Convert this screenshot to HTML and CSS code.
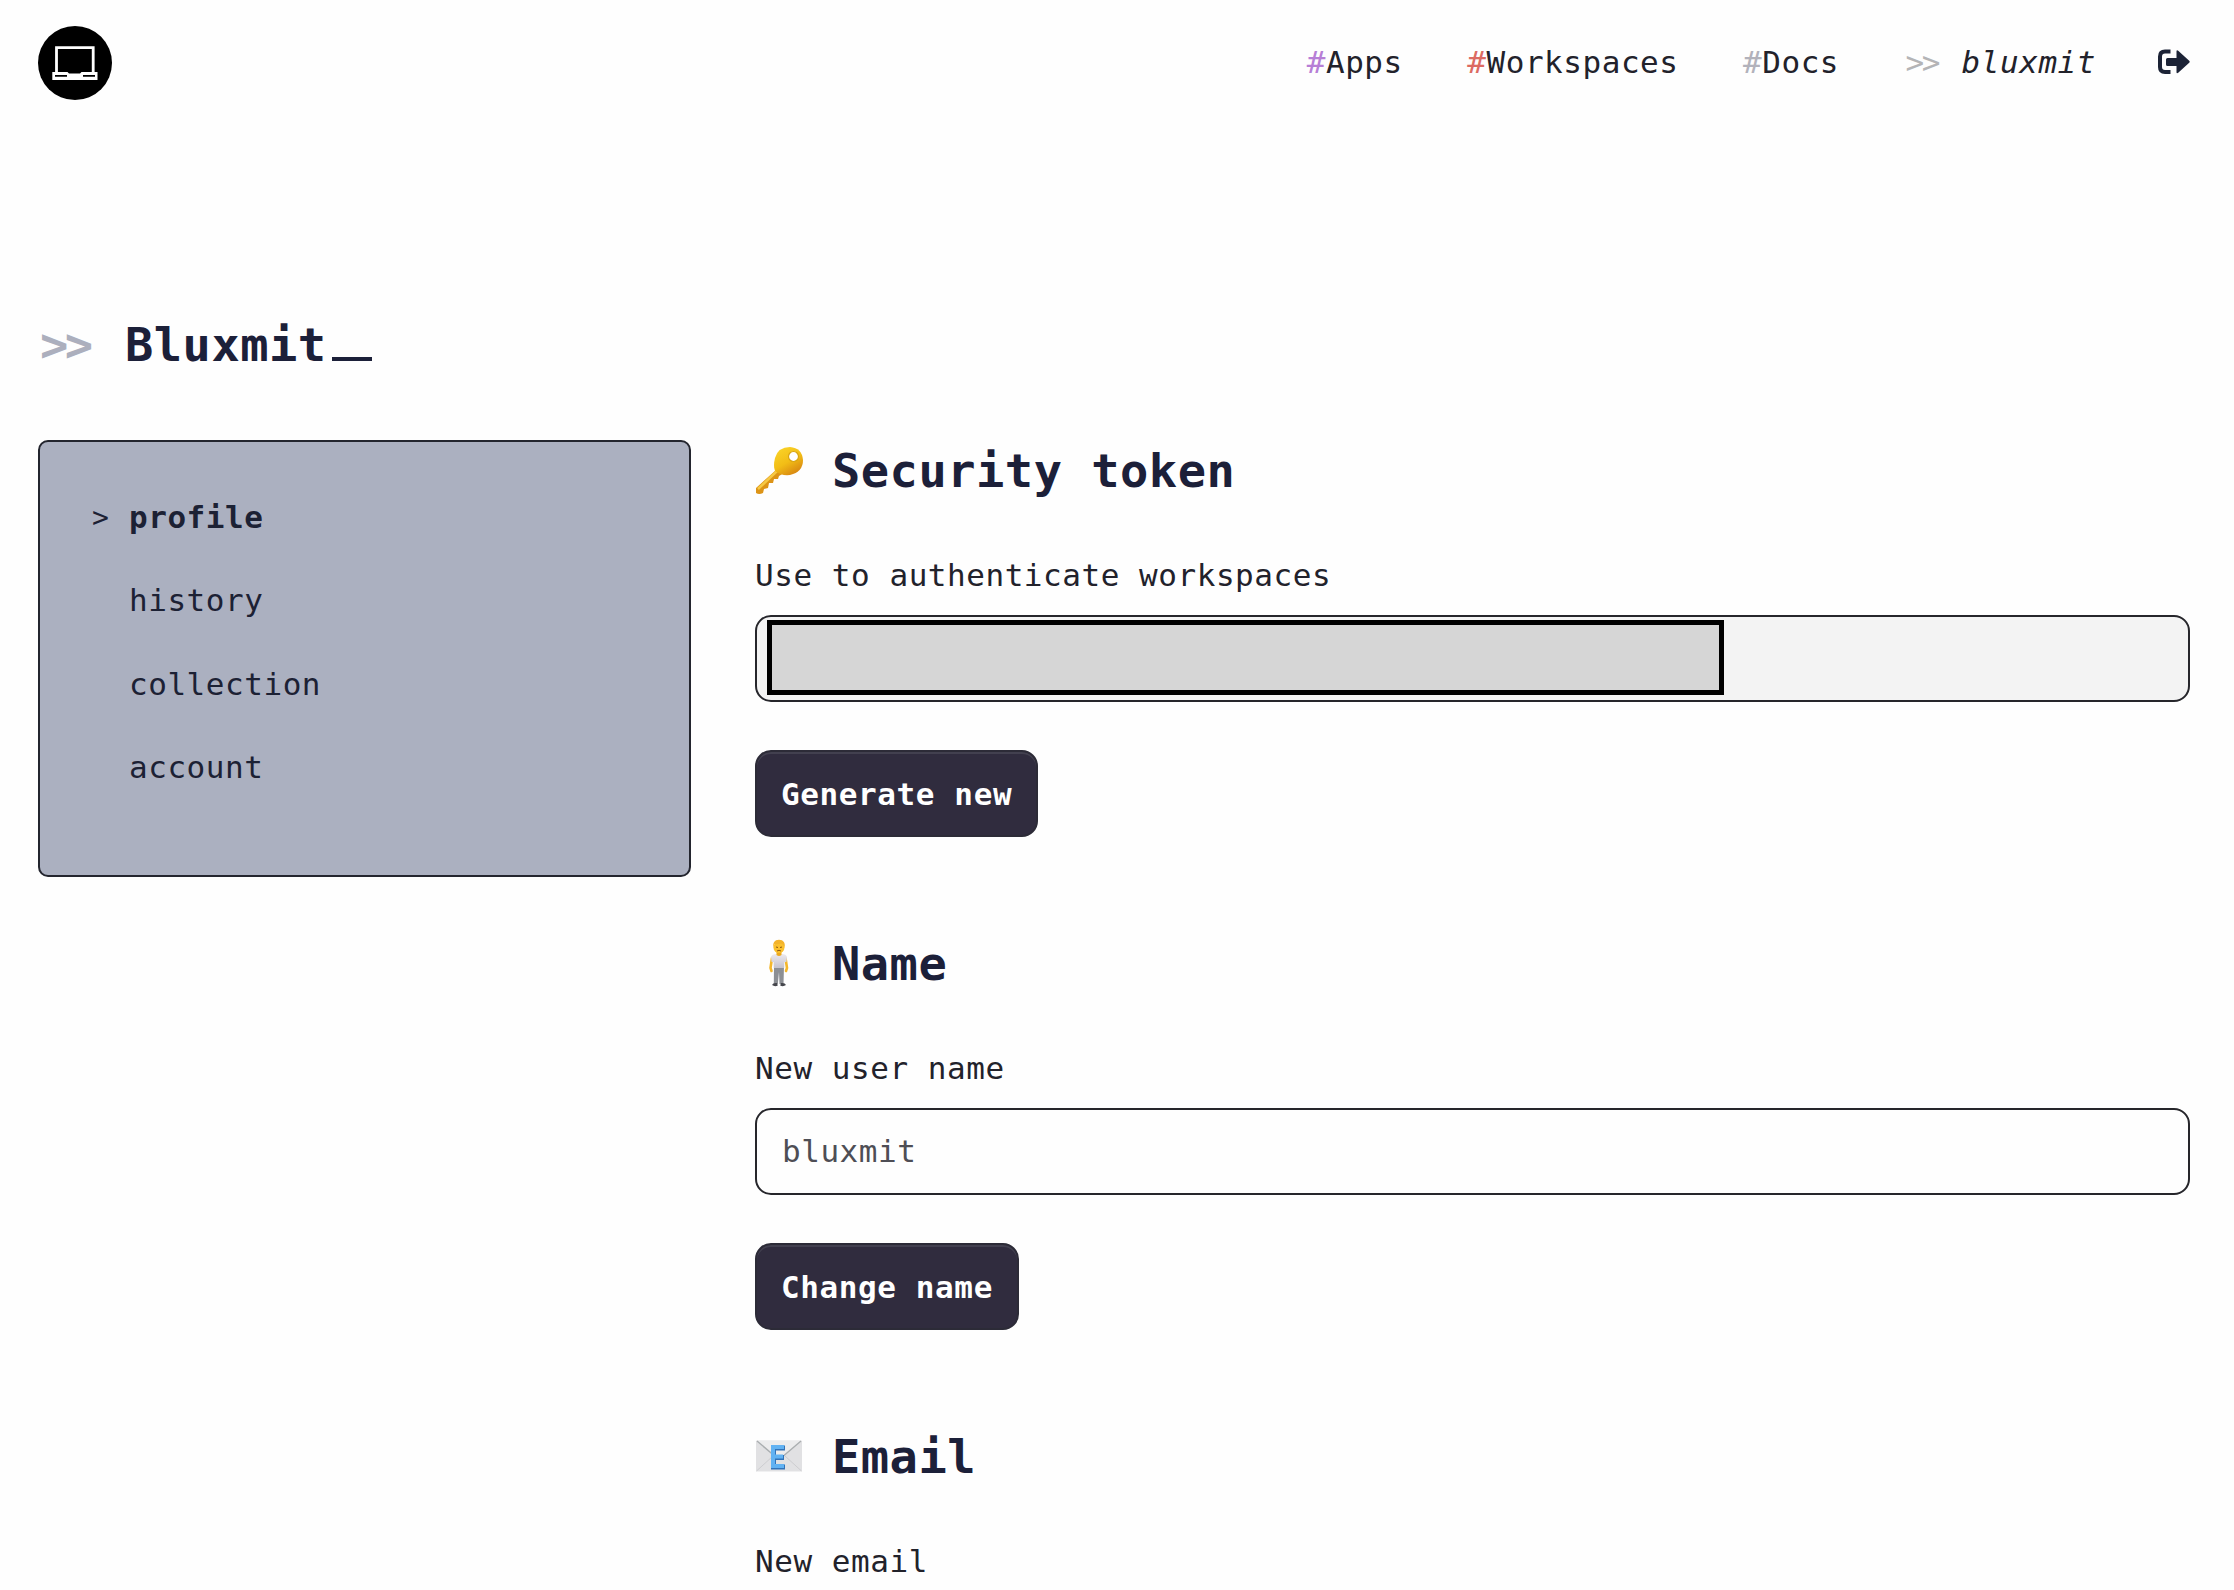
FILE: index.html
```html
<!DOCTYPE html>
<html lang="en">
<head>
<meta charset="utf-8">
<title>Bluxmit</title>
<link rel="stylesheet" href="styles.css">
</head>
<body>
<header class="header">
  <a class="logo"><svg viewBox="0 0 74 74" width="74" height="74"><circle cx="37" cy="37" r="37"/><path d="M18.500 47V21.700h36.700V47" fill="none" stroke="#fff" stroke-width="2.800"/><path d="M14.300 46h15.200l1.500 1.500h11L43.500 46h16v8H14.300z" fill="#fff"/><path d="M17 49.800h12M45 49.800h12" stroke="#000" stroke-width="1.800"/></svg></a>
  <nav class="nav">
    <a class="link"><span class="apps">#</span>Apps</a>
    <a class="link"><span class="spaces">#</span>Workspaces</a>
    <a class="link"><span class="docs">#</span>Docs</a>
    <a class="link user"><span class="chevrons">&gt;&gt;</span><i>bluxmit</i></a>
    <a class="exit"><svg viewBox="0 0 32 26" width="32" height="26"><path d="M12.500 2.500H7Q2 2.500 2 7.500v10.500q0 5 5 5h5.500" fill="none" stroke="#1c2336" stroke-width="4"/><path d="M9.500 9h9V2.600q0-2 1.700-.8l11 10q1 1 0 2l-11 10q-1.700 1.200-1.700-.8V17h-9q-1.500 0-1.500-1.500v-5Q8 9 9.500 9z" fill="#1c2336"/></svg></a>
  </nav>
</header>
<h1 class="title"><span class="chevrons">&gt;&gt;</span><span>Bluxmit</span><span class="cursor"></span></h1>
<div class="columns">
  <aside class="sidebar">
    <a class="item active"><span class="mark">&gt;</span><b>profile</b></a>
    <a class="item"><span class="mark"></span>history</a>
    <a class="item"><span class="mark"></span>collection</a>
    <a class="item"><span class="mark"></span>account</a>
  </aside>
  <main class="main">
    <section class="section">
      <h2 class="heading"><svg class="emoji" viewBox="0 0 48 48" width="48" height="48">
        <defs><linearGradient id="gold" x1="0" y1="0" x2=".6" y2="1"><stop offset="0" stop-color="#fbd72b"/><stop offset=".6" stop-color="#f2bd16"/><stop offset="1" stop-color="#d98a12"/></linearGradient></defs>
        <path d="M21 24 1 42v5q3 2 7 0l1-4 4-1 1-5 4 0 1-4 4 0 1-3 5-3z" fill="#dd9417"/><path d="M22 25 3 43" stroke="#f6c944" stroke-width="2.500"/>
        <path d="M20 12Q23 1 35 1q12 1 13 13 0 12-13 15-9 1-15-4-2-5 0-13z" fill="url(#gold)"/><circle cx="38.500" cy="10.500" r="5" fill="#fff" stroke="#d9a510" stroke-width="1.200"/></svg><span>Security token</span></h2>
      <label class="label">Use to authenticate workspaces</label>
      <div class="field readonly"><div class="mask"></div></div>
      <button class="button">Generate new</button>
    </section>
    <section class="section">
      <h2 class="heading"><svg class="emoji" viewBox="0 0 48 48" width="48" height="48">
        <defs><linearGradient id="shirt" x1="0" y1="0" x2="0" y2="1"><stop offset="0" stop-color="#ece9ef"/><stop offset="1" stop-color="#c5c2cb"/></linearGradient></defs>
        <path d="M17 19l-1.500 10 1 3M30.500 19l1.500 10-1 3" fill="none" stroke="#f4b72c" stroke-width="2.600" stroke-linecap="round"/>
        <path d="M19 27h10l-.5 18h-4L24 33l-1.200 12h-4z" fill="#8c8f94"/>
        <path d="M17 46q1-2.500 5-2l.8 2.500q-3 1.500-5.800-.5M31 46q-1-2.500-5-2l-.8 2.500q3 1.500 5.800-.5" fill="#45464c"/>
        <path d="M16 18q1-3 5-3h6q4 0 5 3l-.6 5h-2l-.2 6H18.800l-.2-6h-2z" fill="url(#shirt)"/>
        <path d="M21.500 12h5v4q-2.500 2-5 0z" fill="#eda91d"/><circle cx="24" cy="8.500" r="5.500" fill="#fbc02c"/><path d="M18.200 9Q17 1 24 .8 31 1 29.800 9q-1-4-4-4.500-4 1-6 .5-1 1-1.600 4z" fill="#f3b32a"/><path d="M21 8l2 .5M27 8l-2 .5M22 12q2-1.500 4 0" fill="none" stroke="#8b5812"/></svg><span>Name</span></h2>
      <label class="label">New user name</label>
      <div class="field">bluxmit</div>
      <button class="button">Change name</button>
    </section>
    <section class="section">
      <h2 class="heading"><svg class="emoji" viewBox="0 0 48 48" width="48" height="48">
        <rect x="1" y="8.500" width="46" height="31" rx="1" fill="#e1e1e3"/><path d="M1.500 39 18 24M46.500 39 30 24" stroke="#cdcdd0"/><path d="M2 9l20 17q2 1.500 4 0L46 9" fill="#ececed" stroke="#aaaeb0" stroke-width="1.400"/>
        <path d="M30 16H18.500v19H30M19 25.500h10" fill="none" stroke="#3273b8" stroke-width="5"/><path d="M29 15H18v19H29M18 24.500h10" fill="none" stroke="#62b2f2" stroke-width="4"/></svg><span>Email</span></h2>
      <label class="label">New email</label>
    </section>
  </main>
</div>
</body>
</html>
```
FILE: styles.css
```css
* { box-sizing: border-box; }
body {
  margin: 0;
  padding: 0 44px 0 38px;
  height: 1590px;
  overflow: hidden;
  background: #fefefe;
  color: #22222b;
  font: 31px/40px "DejaVu Sans Mono", monospace;
  letter-spacing: .54px;
}
.header { display: flex; justify-content: space-between; align-items: center; height: 126px; }
.logo, .exit, .logo svg, .exit svg { display: block; }
.nav { display: flex; align-items: center; }
.link { margin: -3px 64.500px 0 0; white-space: nowrap; }
.apps { color: #b77fd6; }
.spaces { color: #dc6b62; }
.docs { color: #b2b2bb; }
.user { display: flex; margin-right: 62px; }
.user .chevrons { width: 58px; padding-left: 2px; letter-spacing: -2.500px; color: #b4b4b6; }
.exit { margin-top: -3px; }
.title, .heading {
  display: flex;
  margin: 0;
  color: #1c2039;
  font-size: 47px;
  font-weight: bold;
  letter-spacing: .51px;
}
.title { padding-top: 189px; height: 314px; line-height: 60px; }
.title .chevrons { width: 87px; padding-left: 2px; color: #acafbd; letter-spacing: -3.500px; }
.cursor { width: 40px; height: 4px; margin: 42px 0 0 5px; background: #1c2039; }
.columns { display: grid; grid-template-columns: 653px 1435px; gap: 64px; align-items: start; }
.sidebar {
  height: 437px;
  padding: 34px 50px;
  border: 2px solid #23252e;
  border-radius: 10px;
  background: #abb0c0;
  color: #1c2134;
}
.item { display: flex; height: 83.300px; line-height: 83.300px; }
.mark { width: 39px; padding-left: 2px; font-size: 28px; }
.main { display: flex; flex-direction: column; gap: 96px; }
.section { display: flex; flex-direction: column; align-items: flex-start; }
.heading { align-items: center; height: 62px; line-height: 60px; }
.emoji { margin: -2px 29px 0 0; }
.label { margin: 53px 0 20px; }
.field {
  display: flex;
  align-items: center;
  width: 100%;
  height: 87px;
  padding: 0 25px 2px;
  border: 2px solid #26262b;
  border-radius: 16px;
  color: #4e4e55;
}
.readonly { padding: 0 10px; background: #f3f3f3; }
.mask { width: 957px; height: 75px; margin-top: -2px; border: 5px solid #000; background: #d6d6d6; }
.button {
  height: 87px;
  margin-top: 48px;
  padding: 0 24px;
  border: 2px solid #2c2b37;
  border-radius: 16px;
  background: #302c3e;
  box-shadow: inset 0 2px 0 #42404f;
  color: #fff;
  font: bold 31px/40px "DejaVu Sans Mono", monospace;
  letter-spacing: .6px;
}
```
